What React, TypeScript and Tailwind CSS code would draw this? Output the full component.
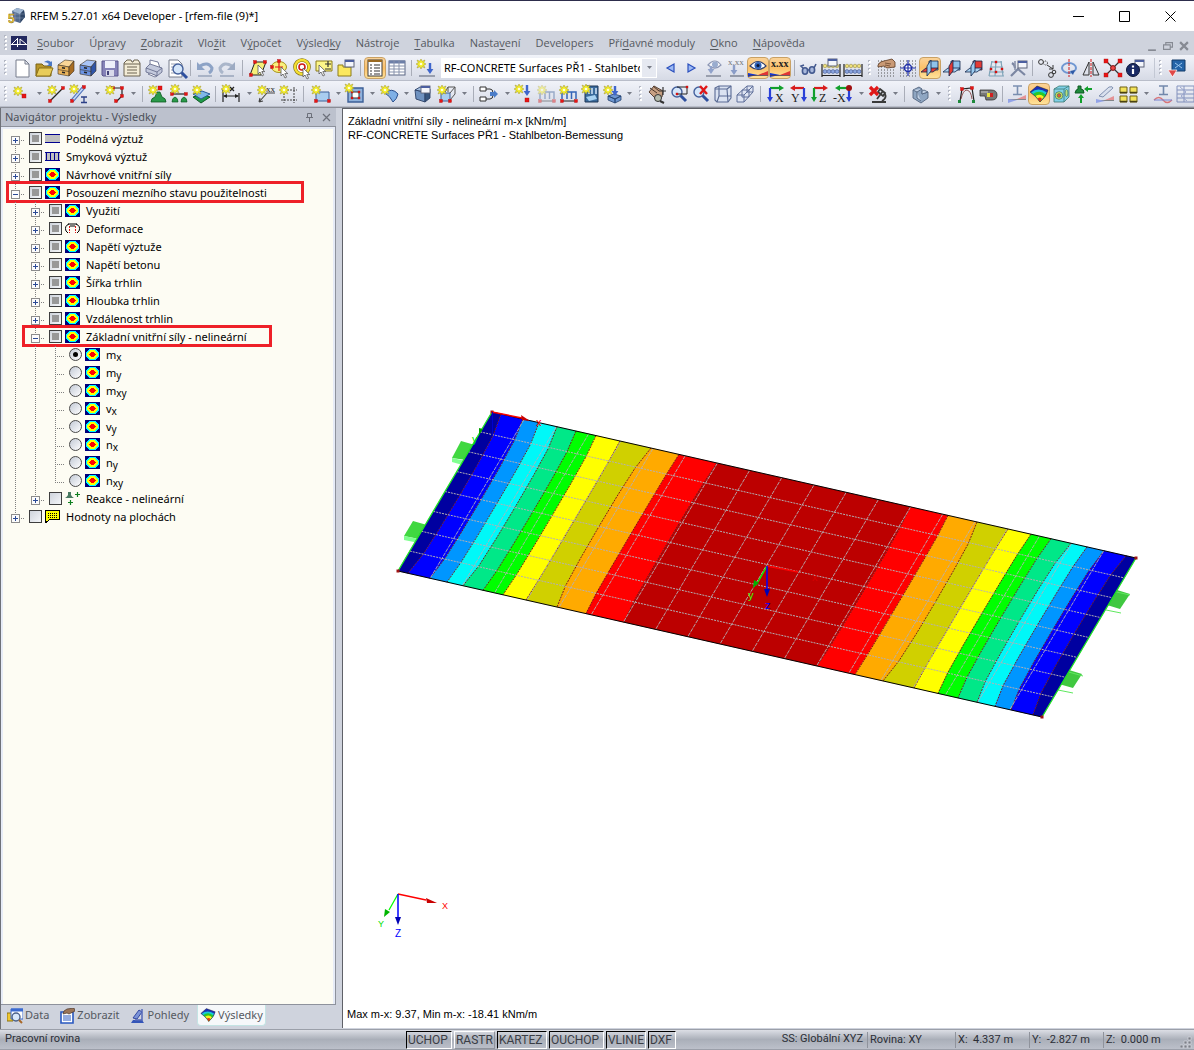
import { Fragment, useState } from 'react';
import type { ReactNode } from 'react';

/* ---------- small drawing pieces shared by the toolbar icons ---------- */

const Star = ({ x = 6, y = 6 }: { x?: number; y?: number }) => (
  <g transform={`translate(${x} ${y})`}>
    <path
      d="M0-5l1.200 2.300L4-4 2.700-1.200 5 0 2.700 1.200 4 4 1.200 2.700 0 5l-1.200-2.300L-4 4l1.300-2.800L-5 0l2.300-1.200L-4-4l2.800 1.300z"
      fill="#f2ec2c"
      stroke="#a0952a"
      strokeWidth=".5"
    />
    <circle r="1.300" fill="#fffde0" />
  </g>
);

const Dot = ({ x, y, s = 4 }: { x: number; y: number; s?: number }) => (
  <rect x={x - s / 2} y={y - s / 2} width={s} height={s} fill="#e81414" stroke="#b01010" strokeWidth=".4" />
);

const Cursor = ({ x, y }: { x: number; y: number }) => (
  <path d={`M${x} ${y}v9l2-2 2 4 1.6-.8-1.8-3.6h3z`} fill="#fff" stroke="#555" strokeWidth=".8" />
);

const Down = ({ x, y = 5, h = 12, c = '#3f66cc' }: { x: number; y?: number; h?: number; c?: string }) => (
  <path d={`M${x - 1.2} ${y}h2.400v${h - 5}h2.200l-3.400 5-3.400-5h2.200z`} fill={c} />
);

const MiniWindow = ({ x, y }: { x: number; y: number }) => (
  <g>
    <rect x={x} y={y} width="9" height="7" fill="#f4f6fb" stroke="#5d6378" />
    <path d={`M${x} ${y + 1}h9`} stroke="#4c5fa0" strokeWidth="2" />
  </g>
);

const Box = ({ c1, c2, c3 }: { c1: string; c2: string; c3: string }) => (
  <g stroke="#3a3024" strokeWidth=".6" strokeLinejoin="round">
    <path d="M2 7l7-5 9 1-5 6z" fill={c1} />
    <path d="M2 7l11 2v9L2 16z" fill={c2} />
    <path d="M13 9l5-6v10l-5 5z" fill={c3} />
    <path d="M2 11.500l11 2" />
    <path d="M6 9.800l3 .5M6 14.300l3 .5" stroke="#222" strokeWidth="1.400" />
  </g>
);

const Magnifier = ({ x = 8, y = 8 }: { x?: number; y?: number }) => (
  <g>
    <path d={`M${x + 3} ${y + 3}l6 6`} stroke="#2d4f9e" strokeWidth="3" />
    <circle cx={x} cy={y} r="5" fill="#d5e6fa" stroke="#44609c" strokeWidth="1.400" />
  </g>
);

const Eye = () => (
  <g>
    <path d="M2 8q8-9 16 0-8 7-16 0z" fill="#fff" stroke="#31416f" strokeWidth="1.200" />
    <circle cx="10" cy="7.500" r="3.500" fill="#2f62b8" />
    <circle cx="10" cy="7.500" r="1.500" fill="#0a1433" />
  </g>
);

const RampLine = () => (
  <g>
    <path d="M0 15v4l10-2z" fill="#1536d0" />
    <path d="M20 13v4H10z" fill="#e03535" />
    <path d="M0 17.500h20" stroke="#4a3b52" strokeWidth=".8" />
  </g>
);

const Plane = ({ red }: { red: string }) => (
  <g strokeWidth=".8" stroke="#13264b" strokeLinejoin="round">
    <path d="M9 3h9v9H9z" fill={red === 'c' ? '#e23b35' : '#8fc2ea'} />
    <path d="M1 14h12l5-4H6z" fill={red === 'a' ? '#e23b35' : '#a9d2f2'} />
    <path d="M7 8l4-6v11l-4 5z" fill={red === 'b' ? '#e23b35' : '#9acbf0'} />
  </g>
);

const Abacus = () => (
  <g>
    <path d="M1 6v13M19 6v13M1 17.500h18" stroke="#222" strokeWidth="1.200" />
    {[4, 8, 12, 16].map((x) => (
      <Fragment key={x}>
        <circle cx={x} cy="8" r="1.800" fill="#eee07a" stroke="#8a7c2c" strokeWidth=".5" />
        <circle cx={x} cy="13.500" r="1.900" fill="#8ba6e0" stroke="#2b4080" strokeWidth=".5" />
      </Fragment>
    ))}
  </g>
);

const AxisView = ({ letter, h, v, flip, lx }: { letter: string; h: string; v: string; flip?: boolean; lx: number }) => (
  <g>
    <path d={flip ? 'M16 4H7' : 'M4 4h9'} stroke={h} strokeWidth="2.200" />
    <path d={flip ? 'M2 4l5-3v6z' : 'M18 4l-5-3v6z'} fill={h} />
    <path d={flip ? 'M16 4v10' : 'M4 4v10'} stroke={v} strokeWidth="2.200" />
    <path d={flip ? 'M16 18l-3-5h6z' : 'M4 18l-3-5h6z'} fill={v} />
    <text x={lx} y="18" fontSize="12" fontFamily="Liberation Serif" fill="#222">
      {letter}
    </text>
  </g>
);

const GridDots = () => (
  <path d="M2 3h17M2 6h17M2 9h17M2 12h17M2 15h17M2 18h17" stroke="#555" strokeWidth="1" strokeDasharray="1 2" />
);

const icons: Record<string, ReactNode> = {
  new: <path d="M4 2h9l4 4v13H4zM13 2v4h4" fill="#fff" stroke="#777d8c" />,
  open: (
    <g>
      <path d="M2 6h6l2 2h7v10H2z" fill="#b8962a" stroke="#7a6214" />
      <path d="M2 18l3-8h14l-3 8z" fill="#e8cc5a" stroke="#8a7018" />
      <path d="M10 4q4-3 7 0l1-1v5h-5l2-2q-2-2-5-2z" fill="#4b78c4" />
    </g>
  ),
  block: <Box c1="#f9d596" c2="#eab45c" c3="#a86d22" />,
  blockBlue: <Box c1="#a9c4f6" c2="#6b94e4" c3="#2f55a8" />,
  save: (
    <g>
      <path d="M2 3h16v15H3l-1-1z" fill="#8683b8" stroke="#5a578c" />
      <path d="M5 3h10v7H5z" fill="#eef0fa" />
      <path d="M6 12h8v6H6z" fill="#d8daea" />
      <path d="M7 13h2v4H7z" fill="#44437a" />
    </g>
  ),
  note: (
    <g>
      <path d="M2 5l3-3h4l1 2h1l1-2h4l2 3v13H2z" fill="#f3ecd6" stroke="#6b6250" />
      <path d="M2 6h16M5 9h10M5 12h10M5 15h10" stroke="#6b6250" />
    </g>
  ),
  print: (
    <g stroke="#6a7190" strokeWidth=".9">
      <path d="M6 2l8 2 2 6-10-2z" fill="#fff" />
      <path d="M2 10l4-4 12 4v4l-5 4-11-4z" fill="#c3c9dc" />
      <path d="M2 10l11 4 5-4M13 14v4" fill="none" />
      <path d="M6 15l7 3-2 1-7-3z" fill="#fff" />
    </g>
  ),
  preview: (
    <g>
      <path d="M3 2h9l4 4v13H3z" fill="#fff" stroke="#777d8c" />
      <path d="M5 6h6M5 9h5M5 12h4M5 15h4" stroke="#9aa0b0" />
      <Magnifier x={12} y={11} />
    </g>
  ),
  undo: (
    <g>
      <path d="M5 8q8-5 12 2 0 3-3 5" fill="none" stroke="#8da3c6" strokeWidth="3" />
      <path d="M2 4v8h8z" fill="#8da3c6" />
      <path d="M3 18h14" stroke="#a9b3c6" strokeWidth="2" />
    </g>
  ),
  redo: (
    <g>
      <path d="M15 8Q7 3 3 10q0 3 3 5" fill="none" stroke="#aab6ca" strokeWidth="3" />
      <path d="M18 4v8h-8z" fill="#9dabc3" />
      <path d="M3 18h14" stroke="#a9b3c6" strokeWidth="2" />
    </g>
  ),
  poly: (
    <g>
      <path d="M7 4h11l-5 13H2z" fill="#f6f07a" stroke="#222" />
      <Dot x={7} y={4} s={3} /><Dot x={17} y={4} s={3} /><Dot x={3} y={17} s={3} />
      <Cursor x={10} y={7} />
    </g>
  ),
  ellipse: (
    <g>
      <ellipse cx="9" cy="9" rx="7.500" ry="5.500" fill="#f8f07c" stroke="#a8921a" />
      <path d="M9 4v9M5 9h8" stroke="#e01414" strokeWidth="1.200" />
      <Dot x={9} y={3} s={3} /><Dot x={2} y={9} s={3} />
      <Cursor x={11} y={9} />
    </g>
  ),
  ring: (
    <g>
      <circle cx="10" cy="9" r="7" fill="#fff" stroke="#7a6a10" strokeWidth="3.600" />
      <circle cx="10" cy="9" r="7" fill="none" stroke="#f5df32" strokeWidth="2.400" />
      <circle cx="10" cy="9" r="3" fill="#fff" stroke="#d01818" strokeWidth="1.600" />
      <Cursor x={11} y={10} />
    </g>
  ),
  plusMinus: (
    <g>
      <path d="M2 3h16v10H2z" fill="#fdf68a" stroke="#8c7c1a" />
      <path d="M11 6h6M14 3v6M11 11h6" stroke="#333" strokeWidth="1.200" />
      <Cursor x={5} y={7} />
    </g>
  ),
  noteWindow: (
    <g>
      <path d="M2 18V7h5v2h8v9z" fill="#fbe85e" stroke="#8c7c1a" />
      <MiniWindow x={9} y={2} />
    </g>
  ),
  list: (
    <g>
      <rect x="3" y="2" width="14" height="16" fill="#fff" stroke="#3d3d3d" />
      <path d="M3 3h14" stroke="#9a6a22" strokeWidth="2" />
      <path d="M5 7h2M9 7h6M5 10h2M9 10h6M5 13h2M9 13h6M5 16h2M9 16h6" stroke="#333" strokeWidth="1.200" />
    </g>
  ),
  table: (
    <g>
      <rect x="2" y="3" width="16" height="14" fill="#fff" stroke="#5a6684" />
      <path d="M2 4h16" stroke="#6d7fa8" strokeWidth="3" />
      <path d="M2 8h16M2 11h16M2 14h16M7 3v14M12 3v14" stroke="#8792ac" />
    </g>
  ),
  loadNew: (
    <g>
      <Star x={5} y={6} /><Down x={14} y={5} h={11} />
      <path d="M3 18h16" stroke="#999fae" strokeWidth="2" />
    </g>
  ),
  prev: <path d="M14 6v8l-7-4z" fill="#9dbaf4" stroke="#2a4fbd" strokeWidth="1.200" />,
  next: <path d="M6 6v8l7-4z" fill="#9dbaf4" stroke="#2a4fbd" strokeWidth="1.200" />,
  eyeGrey: (
    <g opacity=".6">
      <path d="M4 7q7-8 13 0-6 6-13 0z" fill="#fff" stroke="#51608c" strokeWidth="1.200" />
      <circle cx="11" cy="6.500" r="3" fill="#6684b8" />
      <Down x={7} y={8} h={8} c="#5d78b5" />
      <path d="M2 18h15" stroke="#6f7686" strokeWidth="2" />
    </g>
  ),
  xxxGrey: (
    <g opacity=".65">
      <text x="2" y="7" fontSize="9" fontFamily="Liberation Serif" fill="#333">x.xx</text>
      <Down x={8} y={7} h={10} c="#5d78b5" />
      <path d="M4 18h14" stroke="#6f7686" strokeWidth="2" />
    </g>
  ),
  eye: <g><RampLine /><Eye /></g>,
  xxx: (
    <g>
      <RampLine />
      <text x="1" y="9" fontSize="10" fontWeight="700" fontFamily="Liberation Serif" fill="#222">x.xx</text>
    </g>
  ),
  glasses: (
    <g fill="none" stroke="#43598f" strokeWidth="1.600">
      <ellipse cx="6" cy="13" rx="2.600" ry="3.200" fill="#a8b8dc" />
      <ellipse cx="13" cy="12" rx="2.600" ry="3.200" fill="#a8b8dc" />
      <path d="M8.500 12h2M4 10L2 8l3-1M15 10l2-4" />
    </g>
  ),
  abacusWin: <g><Abacus /><MiniWindow x={7} y={1} /></g>,
  abacus: <Abacus />,
  gridHand: (
    <g>
      <GridDots />
      <path d="M2 7q2-4 6-4l8-2 3 3v5l-8 1-3-2-6 1z" fill="#c99a76" stroke="#5c3a22" strokeWidth=".8" />
      <path d="M9 5l6 1M9 7l5 1" stroke="#5c3a22" strokeWidth=".7" />
    </g>
  ),
  gridSnap: (
    <g>
      <GridDots />
      <circle cx="10" cy="10" r="3.500" fill="#fff" stroke="#2030a8" strokeWidth="1.500" />
      <path d="M10 2v16M2 10h16" stroke="#2030a8" strokeWidth="1.200" />
    </g>
  ),
  planeXY: <Plane red="a" />,
  planeYZ: <Plane red="b" />,
  planeXZ: <Plane red="c" />,
  mesh: (
    <g>
      <path d="M6 3L3 18M10 3L9 18M15 3l2 15M5 4h11M4 9h13M3 14h15M3 18h15" fill="none" stroke="#7fa4b8" strokeWidth="1.200" />
      <Dot x={10} y={4} s={2} /><Dot x={5} y={11} s={2} /><Dot x={16} y={11} s={2} /><Dot x={10} y={14} s={2} />
    </g>
  ),
  tools: (
    <g fill="none">
      <path d="M3 18l7-7 7 6M4 5q3 2 3 5" stroke="#7b86a2" strokeWidth="2.200" />
      <path d="M7 3v9" stroke="#8b93aa" strokeWidth="1.600" />
      <MiniWindow x={10} y={3} />
    </g>
  ),
  copyMove: (
    <g fill="none" stroke="#333" strokeWidth="1">
      <circle cx="4" cy="4" r="2.400" /><circle cx="8.500" cy="5" r="2" strokeDasharray="1 1" />
      <circle cx="14" cy="17" r="2.400" /><circle cx="17" cy="14" r="1.800" />
      <path d="M10 7l6 4M16 7v4h-4" />
    </g>
  ),
  rotate: (
    <g fill="none">
      <ellipse cx="10" cy="10" rx="7" ry="5" stroke="#6f97d2" strokeWidth="2" />
      <path d="M10 1v18" stroke="#d01818" strokeDasharray="3 1" />
      <path d="M11 13l5-1-2 5z" fill="#2e5aa6" />
    </g>
  ),
  mirror: (
    <g fill="none" stroke="#333">
      <path d="M8 4v13H2zM12 4v13h6z" />
      <path d="M10 1v18" stroke="#d01818" strokeDasharray="3 1" />
    </g>
  ),
  cross: (
    <g>
      <path d="M3 3l14 14M17 3L3 17" stroke="#333" strokeWidth="1.200" />
      <Dot x={3} y={3} /><Dot x={17} y={3} /><Dot x={3} y={17} /><Dot x={17} y={17} />
      <circle cx="10" cy="10" r="2.400" fill="#f04848" stroke="#801010" />
    </g>
  ),
  info: (
    <g>
      <MiniWindow x={10} y={2} />
      <circle cx="8" cy="12" r="6.500" fill="#1a2b66" stroke="#0c1638" />
      <path d="M8 7.500v2M8 11v5" stroke="#fff" strokeWidth="2.200" />
    </g>
  ),
  screenDown: (
    <g>
      <path d="M5 2h13v11H5z" fill="#2464a8" stroke="#123a68" />
      <path d="M8 5l7 5M15 5l-7 5" stroke="#9cc8f0" />
      <path d="M1 12h9l-4.500 7z" fill="#e04848" stroke="#fff" strokeWidth=".7" />
    </g>
  ),
  node: <g><Star x={6} y={7} /><Dot x={12} y={12} s={4} /></g>,
  line: (
    <g>
      <path d="M4 17L17 4" stroke="#222" strokeWidth="1.200" />
      <Dot x={4} y={17} s={3} /><Dot x={17} y={4} s={3} /><Star x={6} y={6} />
    </g>
  ),
  member: (
    <g>
      <path d="M3 17L15 3" stroke="#4a6db8" strokeWidth="3.600" />
      <path d="M3 17L15 3" stroke="#c4d8f8" strokeWidth="1.800" />
      <Dot x={15} y={3} s={3} /><Dot x={3} y={17} s={3} /><Star x={5} y={5} />
      <path d="M12 13h6M15 13v6M12 18.500h6" stroke="#2b3f86" strokeWidth="1.300" />
    </g>
  ),
  polyline: (
    <g>
      <path d="M8 4h9v8l-6 6" fill="none" stroke="#222" strokeWidth="1.200" />
      <Dot x={8} y={4} s={3} /><Dot x={17} y={4} s={3} /><Dot x={17} y={12} s={3} /><Dot x={11} y={17} s={3} /><Star x={5} y={6} />
    </g>
  ),
  supportNode: (
    <g>
      <path d="M4 18q0-4 4-5l2-5h3l2 5q4 1 4 5z" fill="#2a9a4a" stroke="#0c5a20" strokeWidth=".8" />
      <Dot x={13} y={4} /><Star x={6} y={6} />
    </g>
  ),
  supportLine: (
    <g>
      <path d="M3 10h14" stroke="#222" strokeWidth="1.200" />
      <Dot x={3} y={10} s={3} /><Dot x={17} y={10} s={3} />
      <path d="M3 18q0-4 3-5 3 1 3 5zM12 18q0-4 3-5 3 1 3 5z" fill="#2a9a4a" stroke="#0c5a20" strokeWidth=".7" />
      <Star x={6} y={5} />
    </g>
  ),
  supportSurf: (
    <g>
      <path d="M2 13l9-3 8 3-9 6z" fill="#1f9a4a" stroke="#0c5a20" />
      <path d="M2 10l9-3 8 3-9 5z" fill="#7fb8e8" stroke="#2a5c98" />
      <Star x={6} y={6} />
    </g>
  ),
  dimension: (
    <g>
      <path d="M2 5v13M18 9v9M3 12h14" stroke="#222" strokeWidth="1.200" />
      <path d="M2 12l4-2v4zM18 12l-4-2v4z" fill="#222" />
      <path d="M9 3l4 4M13 3l-4 4" stroke="#222" strokeWidth="1.300" /><Star x={5} y={5} />
    </g>
  ),
  comment: (
    <g>
      <path d="M19 9h-8l-8 9M3 18l1-4M3 18l4-1" fill="none" stroke="#444" strokeWidth="1.100" />
      <text x="10" y="8" fontSize="9" fontFamily="Liberation Serif" fill="#222">xx</text><Star x={6} y={6} />
    </g>
  ),
  guide: (
    <g>
      <path d="M6 3v16M16 3v16M3 6h16M3 16h16" stroke="#444" strokeDasharray="2 1" />
      <Star x={6} y={6} />
    </g>
  ),
  surface: (
    <g>
      <path d="M6 8h13v9H6z" fill="#a9cdf0" stroke="#3c5f96" />
      <Dot x={6} y={17} s={3} /><Dot x={19} y={17} s={3} /><Star x={6} y={6} />
    </g>
  ),
  opening: (
    <g>
      <path d="M3 4h15v14H3z" fill="#8fb2dc" stroke="#3c5f96" strokeWidth="1.400" />
      <path d="M7 8h7v6H7z" fill="#fff" stroke="#333" />
      <Dot x={7} y={8} s={2} /><Dot x={14} y={8} s={2} /><Dot x={7} y={14} s={2} /><Dot x={14} y={14} s={2} />
      <Star x={4} y={4} />
    </g>
  ),
  curved: (
    <g>
      <path d="M6 9q7-6 13 1-1 5-5 8-3-6-8-9z" fill="#7fb0e6" stroke="#2c4f8c" />
      <Star x={6} y={6} />
    </g>
  ),
  solid: (
    <g stroke="#2c4166" strokeWidth=".9">
      <path d="M2 6l10 2v10l-9-3z" fill="#6f92c0" />
      <path d="M12 8l5-3v9l-5 4z" fill="#37567f" />
      <path d="M2 6l5-3 10 2-5 3z" fill="#a5bfe0" />
      <MiniWindow x={8} y={2} />
    </g>
  ),
  solidNew: (
    <g>
      <path d="M5 9h9v8H5z" fill="#a9cdf0" stroke="#3c5f96" />
      <path d="M9 8l3-5h7v7l-5 6M12 3v5M19 3l-5 6" fill="none" stroke="#555" />
      <Dot x={5} y={17} s={3} /><Dot x={14} y={17} s={3} /><Star x={6} y={6} />
    </g>
  ),
  coupling: (
    <g>
      <path d="M7 5h4q3 0 3 4M7 15h4q3 0 3-4" fill="none" stroke="#333" />
      <path d="M1 3h6v4H1zM1 13h6v4H1z" fill="#fff" stroke="#333" />
      <path d="M11 8h4V6l4 4-4 4v-2h-4z" fill="#4a7cc8" />
    </g>
  ),
  loadNode: <g><Star x={5} y={5} /><Down x={13} y={1} h={11} /><Dot x={13} y={16} s={4} /></g>,
  loadGrey: (
    <g opacity=".45">
      <path d="M4 8h14v7M4 8v7M9 8v7M13.500 8v7" fill="none" stroke="#3c5f96" strokeWidth="1.400" />
      <path d="M3 17h16" stroke="#222" /><Dot x={4} y={17} s={3} /><Dot x={18} y={17} s={3} /><Star x={6} y={6} />
    </g>
  ),
  loadLine: (
    <g>
      <path d="M4 8h14v7M4 8v7M9 8v7M13.500 8v7" fill="none" stroke="#3565b8" strokeWidth="1.500" />
      <path d="M3 17h16" stroke="#222" /><Dot x={4} y={17} s={3} /><Dot x={18} y={17} s={3} /><Star x={6} y={6} />
    </g>
  ),
  loadSurf: (
    <g>
      <path d="M5 2h13v16H5z" fill="#3a6a9c" stroke="#1f3657" />
      <path d="M6 13l9-2 2 4-8 2z" fill="#a9d2f2" />
      <path d="M9 4v6M12 4v6M16 4v6" stroke="#d5e6fa" strokeWidth="1.500" /><Star x={6} y={5} />
    </g>
  ),
  loadSolid: (
    <g>
      <path d="M6 12l6-2 7 2-6 3zM6 12l7 3v4l-7-3zM19 12v4l-6 3v-4z" fill="#6d96d0" stroke="#22406e" strokeWidth=".8" />
      <Down x={13} y={2} h={10} /><Star x={6} y={6} />
    </g>
  ),
  pan: (
    <g>
      <path d="M2 8l5-6 9 5-1 6-6 2z" fill="#c7a083" stroke="#4b3628" strokeWidth=".9" />
      <path d="M3 4l7 5M6 2l6 5" stroke="#4b3628" />
      <path d="M16 3v8M12 7h7" stroke="#333" strokeWidth="1.200" />
      <circle cx="11" cy="14" r="3.500" fill="#b5bcae" stroke="#333" /><path d="M13 17l4 2" stroke="#333" strokeWidth="2" />
    </g>
  ),
  zoomWin: <g><Magnifier /><path d="M8 3h10v7H8" fill="none" stroke="#222" /><Dot x={18} y={3} s={2} /><Dot x={8} y={10} s={2} /></g>,
  zoomOff: <g><Magnifier /><path d="M9 2l7 8M16 2l-7 8" stroke="#e01818" strokeWidth="2.400" /></g>,
  cube: (
    <g stroke="#5a6b94" strokeWidth="1.100" strokeLinejoin="round">
      <path d="M2 4l4-2h12v12l-3 4H4L2 16z" fill="#dbe3f2" /><path d="M6 2v10h12M6 12l-2 6M2 5h12l1 13M14 5l4-3" fill="none" />
    </g>
  ),
  layers: (
    <g fill="#dfe5f3" stroke="#5f6f9a">
      <path d="M12 2h6v6h-6zM7 6h7v7H7zM2 11h7v7H2z" /><path d="M2 11l10-9M9 11l9-9M9 18l9-10" fill="none" />
    </g>
  ),
  viewX: <AxisView letter="X" h="#12a02c" v="#2a40d8" lx={9} />,
  viewY: <AxisView letter="Y" h="#d81c1c" v="#2a40d8" flip lx={3} />,
  viewZ: <AxisView letter="Z" h="#d81c1c" v="#12a02c" lx={9} />,
  viewNX: (
    <g>
      <AxisView letter="-X" h="#12a02c" v="#2a40d8" flip lx={0} />
      <circle cx="16" cy="4" r="3" fill="#a01010" />
    </g>
  ),
  results: (
    <g>
      <path d="M4 18h14M9 15l6-8M12 5l5 4-2 3-5-4zM17 10q2 4-3 7" fill="none" stroke="#3a3a3a" strokeWidth="1.800" />
      <path d="M2 3l8 8M10 3l-8 8" stroke="#e01818" strokeWidth="3.200" />
    </g>
  ),
  render: (
    <g stroke="#52647f" strokeWidth=".9">
      <path d="M3 6l6-3 3 2v5l6-2v6l-7 5-8-5z" fill="#8fa6c2" />
      <path d="M12 10l6-2-4-2-2 1zM3 6l4 2 5-3M7 8v6l4 3" fill="#c4d3e6" />
    </g>
  ),
  frame: (
    <g>
      <path d="M4 17L6 5l10-1 2 13" fill="none" stroke="#222" strokeWidth="1.200" />
      <path d="M5 15q2-9 6-9 4 1 5 9" fill="none" stroke="#7a3030" strokeWidth=".8" />
      <Dot x={6} y={5} s={3} /><Dot x={16} y={4} s={3} />
      <path d="M2 16h3v3H2zM16 16h3v3h-3z" fill="#1f8a3c" />
    </g>
  ),
  device: (
    <g>
      <path d="M2 6h11q6 0 6 5t-5 5H8l-1-4H2z" fill="#777" stroke="#333" strokeWidth=".8" />
      <path d="M9 9h6v4H9z" fill="#e6e040" /><path d="M12 9h3v4h-3z" fill="#d02020" />
      <path d="M3 8h7" stroke="#c8c8c8" />
    </g>
  ),
  beamLoad: (
    <g opacity=".65">
      <path d="M6 2h9M10.500 2v8M6 10.500h9" stroke="#41608f" strokeWidth="1.600" />
      <path d="M1 15.500h18" stroke="#555" /><path d="M1 15v4l9-3z" fill="#6c84e8" /><path d="M19 15v-4l-9 4z" fill="#e86868" />
    </g>
  ),
  surfRes: <ResultSurface />,
  cubeRes: (
    <g stroke="#3c7a72" strokeWidth=".8">
      <path d="M3 5l5-3h10v11l-5 5H3z" fill="#7fd0e8" />
      <circle cx="8" cy="11.500" r="3.800" fill="#d8e85a" /><circle cx="8" cy="11.500" r="1.900" fill="#e85830" />
      <ellipse cx="15.500" cy="9" rx="1.500" ry="3.500" fill="#b8e07a" /><path d="M3 5h10v13M13 5l5-3" fill="none" />
    </g>
  ),
  reactions: (
    <g>
      <path d="M2 9q1-4 3-4V2h3v3q3 0 3 4z" fill="#1f8a3c" stroke="#0c5a20" />
      <path d="M14 5h5M8 13v6" stroke="#12a02c" strokeWidth="2" /><path d="M11 5l4-3v6zM8 10l-3 4h6z" fill="#12a02c" />
    </g>
  ),
  section: (
    <g opacity=".65">
      <path d="M4 12L14 3q4-1 4 1L8 13z" fill="#d3dcec" stroke="#4d638f" />
      <path d="M1 16.500h18" stroke="#555" /><path d="M1 15v4l9-2z" fill="#6c84e8" /><path d="M19 12v4h-9z" fill="#e86868" />
    </g>
  ),
  panels: (
    <g fill="#f3e35a" stroke="#6e6118">
      <path d="M2 3h7v6H2zM12 3h7v6h-7zM2 12h7v6H2zM12 12h7v6h-7z" />
      <path d="M2 8.500h7M12 8.500h7M2 17.500h7M12 17.500h7" stroke="#4a4212" strokeWidth="1.300" />
    </g>
  ),
  beamRes: (
    <g opacity=".7">
      <path d="M6 2h9M10.500 2v8M6 10.500h9" stroke="#41608f" strokeWidth="1.600" />
      <path d="M1 16q5-5 9 0t9 0" fill="none" stroke="#d84848" strokeWidth="1.300" /><path d="M1 16h18" stroke="#4a5cc8" />
    </g>
  ),
  tableRes: (
    <g opacity=".7" fill="none" stroke="#5a6ea8">
      <path d="M2 2h17v16H2zM2 6h17M2 10h17M2 14h17M9 2v16" /><path d="M5 3l6 5-5 4 6 5" stroke="#7d8bc0" />
    </g>
  ),
};

function ResultSurface() {
  return (
    <g>
      <path d="M1 8l7-6 11 4q-1 6-8 12-4-6-10-10z" fill="#1a2fb8" />
      <path d="M2 8.500q7-6 16 0l-7 9.500q-4-6-9-9.500z" fill="#18c8d8" />
      <path d="M4 10q7-5 13 1l-6 7q-3-5-7-8z" fill="#28c828" />
      <path d="M6.500 12q5-3 8.500 1l-4 5z" fill="#f6ee20" />
      <path d="M8.500 14.500q3-2 4.500.500l-2 3z" fill="#e83018" />
      <path d="M1 8l7-6 11 4q-1 6-8 12-4-6-10-10z" fill="none" stroke="#222" strokeWidth=".5" />
    </g>
  );
}

const Icon = ({ name }: { name: string }) => (
  <svg viewBox="0 0 20 20" className="size-5 shrink-0 overflow-visible" fill="none" aria-hidden="true">
    {icons[name]}
  </svg>
);

/* ---------- toolbars ---------- */

// "|" separator, "||" wide separator, "v" drop-down arrow, "+name" wide button, "*name" pressed button
const fileTools = ['new', 'open', 'block', 'blockBlue', 'save', 'note', 'print', 'preview', '|', 'undo', 'redo', '||', 'poly', 'ellipse', 'ring', 'plusMinus', 'noteWindow', '|', '*list', 'table', '|', 'loadNew'];
const caseTools = ['prev', 'next', 'eyeGrey', 'xxxGrey', '*eye', '*xxx', '|', 'glasses', 'abacusWin', 'abacus'];
const gridTools = ['gridHand', 'gridSnap', '*planeXY', 'planeYZ', 'planeXZ', 'mesh', 'tools', '|', 'copyMove', 'rotate', 'mirror', 'cross', 'info'];
const insertTools = ['node', 'v', 'line', '+member', 'v', '+polyline', 'v', '|', 'supportNode', 'supportLine', 'supportSurf', '|', '+dimension', 'v', 'comment', 'guide', '||', '+surface', 'v', 'opening', 'v', 'curved', 'v', 'solid', '+solidNew', 'v', '|', '+coupling', 'v', 'loadNode', 'loadGrey', 'loadLine', 'loadSurf', 'loadSolid', 'v'];
const viewTools = ['pan', 'zoomWin', 'zoomOff', 'cube', 'layers', '||', 'viewX', 'viewY', 'viewZ', '+viewNX', 'v', 'results', 'v', '|', '+render', 'v'];
const resultTools = ['frame', 'device', '|', 'beamLoad', '*surfRes', 'cubeRes', 'reactions', 'section', '+panels', 'v', 'beamRes', 'tableRes'];

function Tools({ items }: { items: string[] }) {
  return (
    <>
      {items.map((item, i) => {
        if (item === '|' || item === '||') {
          return (
            <span key={i} className={`flex shrink-0 justify-center ${item === '|' ? 'w-[7px]' : 'w-[9px]'}`}>
              <span className="h-4 w-px bg-[#a9adb8]" />
            </span>
          );
        }
        if (item === 'v') {
          return (
            <button key={i} aria-label="Další možnosti" className="flex h-[22px] w-3 shrink-0 items-center justify-center">
              <svg viewBox="0 0 5 3" className="h-[3px] w-[5px]"><path d="M0 0h5L2.500 3z" fill="#777b86" /></svg>
            </button>
          );
        }
        const name = item.replace(/^[+*]/, '');
        return (
          <button
            key={i}
            aria-label={name}
            className={`flex h-[22px] shrink-0 items-center justify-center ${item[0] === '+' ? 'w-6' : 'w-[22px]'} ${item[0] === '*' ? 'rounded-sm border border-[#c9a164] bg-linear-to-b from-[#fbd398] via-[#fcc067] to-[#ffe39a]' : ''}`}
          >
            <Icon name={name} />
          </button>
        );
      })}
    </>
  );
}

const Grip = () => (
  <span className="flex w-[11px] shrink-0 flex-col items-center justify-center gap-[2px]">
    {[0, 1, 2, 3].map((i) => (
      <span key={i} className="size-[2px] bg-white shadow-[-1px_-1px_0_#b4b8c4]" />
    ))}
  </span>
);

const barClass = 'flex h-[26px] items-center overflow-hidden bg-linear-to-b from-[#f1f3f9] via-[#e4e7f0] to-[#d6dae5] border-b border-[#b9bdc9]';

/* ---------- menu ---------- */

const menu: [string, string, string][] = [
  ['', 'S', 'oubor'], ['Úpr', 'a', 'vy'], ['', 'Z', 'obrazit'], ['Vlo', 'ž', 'it'], ['V', 'ý', 'počet'], ['Výsled', 'k', 'y'],
  ['Nástro', 'j', 'e'], ['', 'T', 'abulka'], ['Nasta', 'v', 'ení'], ['Developers', '', ''], ['Pří', 'd', 'avné moduly'], ['', 'O', 'kno'], ['', 'N', 'ápověda'],
];

function Header() {
  return (
    <header className="shrink-0">
      <div className="flex h-[31px] items-center border-t border-[#2d2d4c] bg-white pl-2">
        <svg viewBox="0 0 18 18" className="size-[18px]">
          <path d="M4 4l5-3 7 2 1 7-5 6-6-2z" fill="#51698c" />
          <path d="M4 4l5-3 7 2-4 4z" fill="#9db4d0" />
          <path d="M12 7l4-4 1 7-5 6z" fill="#2f4566" />
          <path d="M7 2v12M12 1v14M5 7l11 0M6 11l10 0" stroke="#c7d6e8" strokeWidth=".3" />
          <text x="0" y="16" fontSize="12" fontWeight="700" fontFamily="Liberation Sans" fill="#f3cf3a" stroke="#5a4a10" strokeWidth=".4">5</text>
        </svg>
        <h1 className="pl-1 text-[11px] text-black">RFEM 5.27.01 x64 Developer - [rfem-file (9)*]</h1>
        <div className="ml-auto flex h-full pr-px">
          {[['Minimalizovat', 'M0 5.500h11'], ['Maximalizovat', 'M.5.5h10v10H.5z'], ['Zavřít', 'M.5.5l10 10M10.500.500l-10 10']].map(([label, d]) => (
            <button key={label} aria-label={label} className="flex w-[46px] items-center justify-center">
              <svg viewBox="0 0 11 11" className="size-[11px]"><path d={d} fill="none" stroke="#000" /></svg>
            </button>
          ))}
        </div>
      </div>
      <div className="flex h-6 items-center bg-[#cfd3dd]">
        <Grip />
        <svg viewBox="0 0 16 14" className="h-[14px] w-4 shrink-0">
          <path d="M0 0h16v14H0z" fill="#22285e" />
          <path d="M0 8.500h16M6.500 2v9M6 3L1 8M9 3l6 5M9 3v5" stroke="#fff" fill="none" />
        </svg>
        <nav className="flex gap-[15px] pl-[10px] font-['Open_Sans',sans-serif] text-[11px] whitespace-nowrap text-[#55595f]">
          {menu.map(([a, b, c]) => (
            <a key={a + b + c} href="#">{a}<span className="underline underline-offset-2">{b}</span>{c}</a>
          ))}
        </nav>
        <div className="ml-auto flex h-full items-end gap-[6px] pr-[5px] pb-1">
          {[['Minimalizovat dokument', 'M1 8.500h7', 2], ['Obnovit dokument', 'M.500 3.500h6v4h-6zM2.500 3V1.500h6v4H7', 1], ['Zavřít dokument', 'M1 1l7 7M8 1L1 8', 2]].map(([label, d, w]) => (
            <button key={label} aria-label={label as string}>
              <svg viewBox="0 0 9 9" className="size-[10px]"><path d={d as string} fill="none" stroke="#868a93" strokeWidth={w} /></svg>
            </button>
          ))}
        </div>
      </div>
      <div className="bg-[#cfd3dd]">
        <div className={barClass}>
          <Grip />
          <Tools items={fileTools} />
          <div className="relative mr-[2px] ml-1 flex h-5 w-[216px] shrink-0">
            <select aria-label="Zatěžovací stav" className="block size-full appearance-none border border-white bg-white py-0 pr-4 pl-[2px] text-[11px] leading-[18px] text-black" defaultValue="pr1">
              <option value="pr1">RF-CONCRETE Surfaces PŘ1 - Stahlbeton-Bemessung</option>
            </select>
            <span className="pointer-events-none absolute inset-y-px right-px flex w-[14px] items-center justify-center bg-[#e6e9f1]">
              <svg viewBox="0 0 5 3" className="h-[3px] w-[5px]"><path d="M0 0h5L2.500 3z" fill="#777b86" /></svg>
            </span>
          </div>
          <Tools items={caseTools} />
          <Grip />
          <Tools items={gridTools} />
          <span className="ml-2 h-5 w-px shrink-0 bg-[#c3c8d4]" />
          <Grip />
          <Tools items={['screenDown']} />
        </div>
        <div className={barClass}>
          <Grip />
          <Tools items={insertTools} />
          <Grip />
          <Tools items={viewTools} />
          <Grip />
          <Tools items={resultTools} />
        </div>
      </div>
    </header>
  );
}

/* ---------- navigator tree ---------- */

const ContourIcon = () => (
  <svg viewBox="0 0 15 13" className="h-[13px] w-[15px]" shapeRendering="crispEdges">
    <path d="M0 0h15v13H0z" fill="#00007c" />
    <path d="M4 1h7v1h1v1h1v1h1v5h-1v1h-1v1h-1v1H4v-1H3v-1H2V9H1V4h1V3h1V2h1z" fill="#00ffff" />
    <path d="M5 2h5v1h1v1h1v1h1v3h-1v1h-1v1h-1v1H5v-1H4V9H3V8H2V5h1V4h1V3h1z" fill="#ffff00" />
    <path d="M6 4h3v1h1v1h1v1h-1v1H9v1H6V8H5V7H4V6h1V5h1z" fill="#ff0000" />
  </svg>
);

const treeIcons: Record<string, ReactNode> = {
  contour: <ContourIcon />,
  bars: (
    <svg viewBox="0 0 15 9" className="h-[9px] w-[15px]" shapeRendering="crispEdges">
      <path d="M0 0h15v9H0z" fill="#c0c0c0" />
      <path d="M0 0h15v1H0zM0 8h15v1H0z" fill="#000090" />
    </svg>
  ),
  stirrups: (
    <svg viewBox="0 0 15 9" className="h-[9px] w-[15px]" shapeRendering="crispEdges">
      <path d="M0 0h15v9H0z" fill="#c0c0c0" />
      <path d="M0 0h15v1H0zM0 8h15v1H0zM1 0h1v9H1zM5 0h1v9H5zM9 0h1v9H9zM13 0h1v9h-1z" fill="#000090" />
    </svg>
  ),
  deform: (
    <svg viewBox="0 0 15 11" className="h-[11px] w-[15px]" fill="none">
      <path d="M4 1Q-1 3 1 8l2 2M11 1q5 2 3 7l-2 2M3 1h9M5 3h5" stroke="#000" />
      <path d="M4.500 3v7M10.500 3v7" stroke="#e01414" strokeDasharray="2 1" />
    </svg>
  ),
  reaction: (
    <svg viewBox="0 0 15 13" className="h-[13px] w-[15px]">
      <path d="M0 6q2-1 3-3V0h3v3q1 2 3 3z" fill="#4a7a62" /><path d="M10 2.500h5M12.500 0v5M3 10.500h5M5.500 8v5" stroke="#108020" strokeWidth="1.200" />
    </svg>
  ),
  values: (
    <svg viewBox="0 0 15 13" className="h-[13px] w-[15px]" shapeRendering="crispEdges">
      <path d="M.5.5h14v9H5l-4 3z" fill="#ffff00" stroke="#000" /><path d="M3 3.500h10M3 5.500h10M3 7.500h10" stroke="#000" strokeDasharray="1 1" />
    </svg>
  ),
};

type Row = { level: number; text: string; sub?: string; icon: string; kind?: 'off' | 'radio'; open?: boolean; mark?: string };

const rows: Row[] = [
  { level: 0, text: 'Podélná výztuž', icon: 'bars' },
  { level: 0, text: 'Smyková výztuž', icon: 'stirrups' },
  { level: 0, text: 'Návrhové vnitřní síly', icon: 'contour' },
  { level: 0, text: 'Posouzení mezního stavu použitelnosti', icon: 'contour', open: true, mark: 'left-px w-[298px]' },
  { level: 1, text: 'Využití', icon: 'contour' },
  { level: 1, text: 'Deformace', icon: 'deform' },
  { level: 1, text: 'Napětí výztuže', icon: 'contour' },
  { level: 1, text: 'Napětí betonu', icon: 'contour' },
  { level: 1, text: 'Šířka trhlin', icon: 'contour' },
  { level: 1, text: 'Hloubka trhlin', icon: 'contour' },
  { level: 1, text: 'Vzdálenost trhlin', icon: 'contour' },
  { level: 1, text: 'Základní vnitřní síly - nelineární', icon: 'contour', open: true, mark: 'left-[17px] w-[250px]' },
  { level: 2, text: 'm', sub: 'x', icon: 'contour', kind: 'radio' },
  { level: 2, text: 'm', sub: 'y', icon: 'contour', kind: 'radio' },
  { level: 2, text: 'm', sub: 'xy', icon: 'contour', kind: 'radio' },
  { level: 2, text: 'v', sub: 'x', icon: 'contour', kind: 'radio' },
  { level: 2, text: 'v', sub: 'y', icon: 'contour', kind: 'radio' },
  { level: 2, text: 'n', sub: 'x', icon: 'contour', kind: 'radio' },
  { level: 2, text: 'n', sub: 'y', icon: 'contour', kind: 'radio' },
  { level: 2, text: 'n', sub: 'xy', icon: 'contour', kind: 'radio' },
  { level: 1, text: 'Reakce - nelineární', icon: 'reaction', kind: 'off' },
  { level: 0, text: 'Hodnoty na plochách', icon: 'values', kind: 'off' },
];

const hasNext = (i: number, level: number) => {
  const next = rows.slice(i + 1).find((r) => r.level <= level);
  return next !== undefined && next.level === level;
};

function TreeRow({ row, index }: { row: Row; index: number }) {
  const id = `row-${index}`;
  const last = !hasNext(index, row.level);
  return (
    <li className="relative flex h-[18px] items-center">
      {Array.from({ length: row.level }, (_, l) => (
        <svg key={l} viewBox="0 0 20 18" className="h-[18px] w-5 shrink-0">
          {hasNext(index, l) && <path d="M10.500 0v18" stroke="#808080" strokeDasharray="1 1" />}
        </svg>
      ))}
      {row.kind === 'radio' ? (
        <svg viewBox="0 0 20 18" className="h-[18px] w-5 shrink-0">
          <path d={`M10.500 0v${last ? 10 : 18}M10 10.500h10`} stroke="#808080" strokeDasharray="1 1" />
        </svg>
      ) : (
        <button aria-label={row.open ? 'Sbalit' : 'Rozbalit'} className="h-[18px] w-5 shrink-0">
          <svg viewBox="0 0 20 18" className="h-[18px] w-5" shapeRendering="crispEdges">
            <path d={`M10.500 ${index === 0 ? 10 : 0}V${last ? 10 : 18}M10 10.500h10`} stroke="#808080" strokeDasharray="1 1" />
            <rect x="6.500" y="6.500" width="8" height="8" fill="#fcfcfc" stroke="#8c8c8c" />
            <path d={row.open ? 'M8 10.500h5' : 'M8 10.500h5M10.500 8v5'} stroke="#2b4a96" />
          </svg>
        </button>
      )}
      <span className="flex h-[18px] w-5 shrink-0 items-center pb-px pl-1">
        {row.kind === 'radio' ? (
          <input
            type="radio" name="force" id={id} defaultChecked={row.sub === 'x' && row.text === 'm'}
            className="size-[13px] appearance-none rounded-full border border-[#4a4a4a] bg-linear-to-br from-[#c3cad6] to-white checked:before:m-[3px] checked:before:block checked:before:size-[5px] checked:before:rounded-full checked:before:bg-black"
          />
        ) : (
          <input
            type="checkbox" id={id} defaultChecked={row.kind !== 'off'}
            className="size-[13px] appearance-none border border-[#3e3e3e] bg-linear-to-br from-[#cfd4dc] to-[#f4f6f9] checked:before:m-[2px] checked:before:block checked:before:size-[7px] checked:before:bg-[#989898]"
          />
        )}
      </span>
      <span className="flex h-[18px] w-[15px] shrink-0 items-center justify-center pb-px">{treeIcons[row.icon]}</span>
      <label htmlFor={id} className="pl-[6px] text-[11px] leading-[18px] whitespace-nowrap">
        {row.text}
        {row.sub && <sub className="bottom-[-2px] text-[10px]">{row.sub}</sub>}
      </label>
      {row.mark && <span className={`pointer-events-none absolute -top-[3px] -bottom-px border-[3px] border-[#ee2028] ${row.mark}`} />}
    </li>
  );
}

const tabs = [
  { name: 'Data', icon: <g><path d="M0 5h6v8H0z" fill="#f0c830" stroke="#8c7214" /><path d="M4 1h12v10H4z" fill="#fff" stroke="#3a6ad0" /><path d="M4 2h12" stroke="#3a6ad0" strokeWidth="3" /><circle cx="9" cy="9" r="4" fill="#d8e8fa" stroke="#4a6088" strokeWidth="1.400" /><path d="M12 12l3 3" stroke="#a8682a" strokeWidth="2" /></g> },
  { name: 'Zobrazit', icon: <g><path d="M2 4h12v11H2z" fill="#fff" stroke="#2858c0" strokeWidth="1.600" /><path d="M4 8h8M4 10h8M4 12h8" stroke="#2858c0" /><path d="M5 3l3-2 7-1 1 3-6 3-2-1-4 1z" fill="#9a7458" stroke="#4b3628" strokeWidth=".7" /></g> },
  { name: 'Pohledy', icon: <g><path d="M1 15h13l-2-3H3z" fill="#3455b8" /><path d="M3 10l6-8 3 2-5 7z" fill="#7b93d8" stroke="#3448a0" /><path d="M12 1v12M5 12h7" stroke="#5468b8" strokeWidth="1.500" /></g> },
  { name: 'Výsledky', icon: <g transform="scale(.8)"><ResultSurface /></g> },
];

function Navigator() {
  const [active, setActive] = useState('Výsledky');
  return (
    <aside className="flex w-[336px] shrink-0 flex-col border-l border-[#6e7178] bg-[#cfd3dd]">
      <div className="flex h-[18px] shrink-0 items-center bg-[#bcc1cd] pr-[5px] pl-1 text-[11px] text-[#4b4f58]">
        <h2>Navigátor projektu - Výsledky</h2>
        <button aria-label="Připnout" className="mr-2 ml-auto">
          <svg viewBox="0 0 9 9" className="size-[9px]"><path d="M2.500.500h4v4h-4zM1 4.500h7M4.500 5v4" fill="none" stroke="#6c707a" /></svg>
        </button>
        <button aria-label="Zavřít navigátor">
          <svg viewBox="0 0 9 9" className="size-[9px]"><path d="M1 1l7 7M8 1L1 8" stroke="#6c707a" strokeWidth="1.200" /></svg>
        </button>
      </div>
      <div className="min-h-0 flex-1 overflow-hidden border-t border-r border-b border-[#8e929c] bg-[#e7ecf7] pt-[2px] pr-[2px] pl-[2px]">
        <ul className="h-full bg-[#fdfcf3] pt-px pl-[2px]">
          {rows.map((row, i) => <TreeRow key={i} row={row} index={i} />)}
        </ul>
      </div>
      <div className="flex h-6 shrink-0 items-start pl-1">
        {tabs.map(({ name, icon }) => (
          <button
            key={name}
            onClick={() => setActive(name)}
            className={`mr-[6px] flex h-[21px] items-center gap-[2px] px-[2px] text-[11px] text-[#55595f] ${name === active ? 'rounded-b border-x border-b border-[#c4e4e4] bg-[#f6f8fa]' : ''}`}
          >
            <svg viewBox="0 0 16 16" className="size-[16px]" fill="none">{icon}</svg>
            {name}
          </button>
        ))}
      </div>
    </aside>
  );
}

/* ---------- result plot ---------- */

const bandColors = ['#0000a0', '#0000ff', '#0096ff', '#00f8f8', '#00e888', '#00ff00', '#ffff00', '#d0d000', '#ffaa00', '#ff0000', '#bc0000', '#ff0000', '#ffaa00', '#d0d000', '#ffff00', '#00ff00', '#00e888', '#00f8f8', '#0096ff', '#0000ff', '#0000a0'];

// distance of each isoline from the supported edge: at the plate edge, in the middle, at the far edge
const isolines: [number, number, number][] = [
  [9, 15, 10], [31, 36, 32], [47, 52, 49], [65, 70, 65], [84, 88, 85], [104, 107, 105], [128, 129, 128], [159, 154, 159], [187, 186, 188], [225, 223, 226],
];

const point = (d: number, v: number): [number, number] => [492 + d - 94 * v, 412 + (146 / 644) * d + 159 * v];

const steps = [0, 0.13, 0.3, 0.5, 0.7, 0.87, 1];
const bulge = [0, 0.72, 0.95, 1, 0.95, 0.72, 0];

const leftIso = isolines.map(([a, m, b]) => steps.map((v, i) => {
  const edge = a + (b - a) * v;
  return point(edge + (m - edge) * bulge[i], v);
}));
const rightIso = [...isolines].reverse().map(([a, m, b]) => steps.map((v, i) => {
  const edge = b + (a - b) * v;
  return point(644 - (edge + (m - edge) * bulge[i]), v);
}));
const edges = [steps.map((v) => point(0, v)), ...leftIso, ...rightIso, steps.map((v) => point(644, v))];

const toPath = (pts: [number, number][]) => pts.map(([x, y]) => `${x.toFixed(1)},${y.toFixed(1)}`).join(' ');

const Plot = () => (
  <svg viewBox="343 142 849 865" preserveAspectRatio="xMinYMin meet" className="min-h-0 w-full flex-1" role="img" aria-label="Průběh m-x na desce">
    <g fill="#40d840">
      <path d="M461 441l14 4-9 15-14-2z" /><path d="M452 458l14 3v5l-14-4z" fill="#80ff90" />
      <path d="M413 521l14 4-8 14-15-3z" /><path d="M404 536l15 3v4l-15-3z" fill="#80ff90" />
      <path d="M1117 590l13 4-10 15-13-4z" fill="#40c840" /><path d="M1069 670l13 4-9 14-14-4z" fill="#40c840" />
      <path d="M1106 610l15 3M1058 690l15 3M1112 591l18 4M1065 671l18 5" stroke="#60e860" />
    </g>
    {bandColors.map((c, i) => (
      <polygon key={i} points={`${toPath(edges[i])} ${toPath([...edges[i + 1]].reverse())}`} fill={c} stroke={c} strokeWidth=".3" />
    ))}
    <g fill="none" stroke="#6e1010" strokeDasharray="2 1" strokeWidth=".9">
      {edges.slice(1, -1).map((e, i) => <polyline key={i} points={toPath(e)} />)}
    </g>
    <g fill="none" stroke="#b4b0b4">
      {Array.from({ length: 19 }, (_, i) => (
        <polyline key={i} points={toPath([point(32.2 * (i + 1), 0), point(32.2 * (i + 1), 1)])} strokeDasharray="4 1" strokeWidth=".9" />
      ))}
      {Array.from({ length: 7 }, (_, i) => (
        <polyline key={i} points={toPath([point(0, (i + 1) / 8), point(644, (i + 1) / 8)])} strokeDasharray="2 1" />
      ))}
    </g>
    <path d="M492 412L1136 558M398 571L1042 717" stroke="#000" />
    <path d="M492 412L398 571M1136 558l-94 159" stroke="#20e820" strokeWidth="1.300" />
    <g fill="#a01414">
      <path d="M490.500 410.500h3v3h-3zM396.500 569.500h3v3h-3zM1134.500 556.500h3v3h-3zM1040.500 715.500h3v3h-3z" />
    </g>
    <path d="M492 412l30 6" stroke="#ff0000" strokeWidth="1.500" />
    <path d="M530 421l-9-6 1 5z" fill="#c80000" />
    <path d="M492.500 412v24" stroke="#0000d0" />
    <path d="M479 435l0-7 4 1z" fill="#00a000" />
    <path d="M767 566l31 6" stroke="#ff0000" strokeWidth="1.500" />
    <path d="M767 566l-9 16" stroke="#00ff00" strokeWidth="1.300" />
    <path d="M753 588l1-8 5 3z" fill="#00b400" />
    <path d="M767 566v24" stroke="#0000ff" strokeWidth="1.500" />
    <path d="M767 597l-3-8h6z" fill="#0000b4" />
    <path d="M398 894l28 6" stroke="#ff0000" strokeWidth="1.300" />
    <path d="M437 903l-11-5 1 5z" fill="#c80000" />
    <path d="M398 894l-9 16" stroke="#00ff00" strokeWidth="1.300" />
    <path d="M384 917l1-8 5 3z" fill="#00b400" />
    <path d="M398 894v24" stroke="#0000ff" strokeWidth="1.500" />
    <path d="M398 925l-3-8h6z" fill="#0000b4" />
    <g fontSize="11" fontFamily="Liberation Sans">
      <text x="536" y="426" fill="#ff0000">x</text>
      <text x="472" y="443" fill="#00e000">y</text>
      <text x="812" y="581" fill="#d80000">x</text>
      <text x="748" y="599" fill="#40ff00">y</text>
      <text x="765" y="609" fill="#0000ff">z</text>
      <text x="442" y="909" fontSize="9" fill="#ff0000">X</text>
      <text x="378" y="927" fontSize="9" fill="#00e000">Y</text>
      <text x="395" y="937" fontSize="10" fill="#0000ff">Z</text>
    </g>
  </svg>
);

/* ---------- status bar ---------- */

const toggles = [
  ['UCHOP', 'w-[46px]'], ['RASTR', 'w-[41px]'], ['KARTEZ', 'w-[50px]'], ['OUCHOP', 'w-[55px]'], ['VLINIE', 'w-[40px]'], ['DXF', 'w-7'],
];

const readouts = [['Rovina: XY', 'w-[88px]'], ['X:\u00a0 4.337 m', 'w-[74px]'], ['Y:\u00a0 -2.827 m', 'w-[74px]'], ['Z:\u00a0 0.000 m', 'w-[91px]']];

const StatusBar = () => (
  <footer className="flex h-[21px] shrink-0 items-center border-t border-b border-[#9b9fa9] bg-linear-to-b from-[#dcdee5] via-[#aaafb9] to-[#bcc0ca] font-['Roboto',sans-serif] text-[11px] text-[#2b2e36]">
    <p className="w-[34%] pl-[5px]">Pracovní rovina</p>
    <div className="flex items-center gap-[2px]">
      {toggles.map(([name, width]) => (
        <button
          key={name}
          className={`h-[18px] border pl-px text-left text-[12px] leading-4 text-[#3a3d45] ${width} ${name === 'RASTR' ? 'border-white border-r-[#8f939c] border-b-[#8f939c]' : 'border-black border-r-white border-b-white'}`}
        >
          {name}
        </button>
      ))}
    </div>
    <p className="ml-auto px-1">SS: Globální XYZ</p>
    {readouts.map(([text, width], i) => (
      <p key={text} className={`flex justify-between border-l border-[#8f939c] pl-[2px] leading-4 ${width}`}>
        {text}
        {i === 3 && (
          <svg viewBox="0 0 12 12" className="mr-[2px] size-3 self-end">
            <path d="M8 1h3v3H8zM4 5h3v3H4zM8 5h3v3H8zM0 9h3v3H0zM4 9h3v3H4zM8 9h3v3H8z" fill="#7d8089" stroke="#d4d6dc" strokeWidth=".7" />
          </svg>
        )}
      </p>
    ))}
  </footer>
);

export default function App() {
  return (
    <div className="flex h-screen flex-col overflow-hidden bg-[#cfd3dd] font-['Noto_Sans','Open_Sans',sans-serif] text-black">
      <Header />
      <div className="flex min-h-0 flex-1 gap-[6px] border-t border-[#8a8d96]">
        <Navigator />
        <main className="mb-px flex min-w-0 flex-1 flex-col border-t border-l border-[#5f6168] bg-white pt-[5px] font-['Liberation_Sans',sans-serif] text-[11px] leading-[14px]">
          <div className="h-7 shrink-0 pl-[5px]">
            <p>Základní vnitřní síly - nelineární m-x [kNm/m]</p>
            <p>RF-CONCRETE Surfaces PŘ1 - Stahlbeton-Bemessung</p>
          </div>
          <Plot />
          <p className="shrink-0 pb-[7px] pl-1">Max m-x: 9.37, Min m-x: -18.41 kNm/m</p>
        </main>
      </div>
      <StatusBar />
    </div>
  );
}
